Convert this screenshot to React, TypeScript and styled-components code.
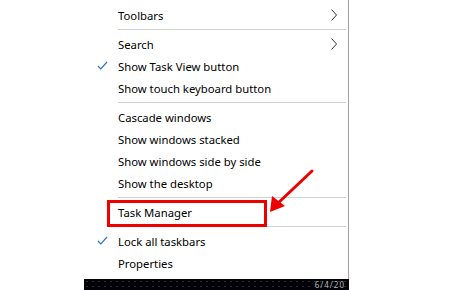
import React from "react";
import styled, { createGlobalStyle } from "styled-components";

const Global = createGlobalStyle`
  html, body { margin: 0; padding: 0; background: #fff; }
  body { width: 450px; height: 290px; overflow: hidden; font-family: "Segoe UI", "Noto Sans", "Open Sans", sans-serif; }
`;

const Page = styled.div`
  position: relative;
  width: 450px;
  height: 290px;
  display: flex;
  flex-direction: column;
`;

const Menu = styled.div`
  margin-left: 84px;
  width: 265px;
  height: 279px;
  box-sizing: border-box;
  border-right: 1px solid #a0a0a0;
  background: #fff;
  padding-top: 4px;
  display: flex;
  flex-direction: column;
`;

const Item = styled.div<{ $boxed?: boolean }>`
  position: relative;
  height: 22px;
  display: flex;
  align-items: center;
  padding-left: 34px;
  padding-right: 10px;
  font-size: 11.3px;
  color: #000;
  white-space: nowrap;
  &::after {
    content: "";
    display: ${(p) => (p.$boxed ? "block" : "none")};
    position: absolute;
    left: 23px;
    top: -1px;
    width: 160px;
    height: 27px;
    border: 3px solid #ee0000;
    box-sizing: border-box;
  }
`;

const Label = styled.span`
  flex: 1;
`;

const Check = styled.svg`
  position: absolute;
  left: 13px;
  top: 6px;
`;

const Chevron = styled.svg`
  margin-right: 1px;
`;

const Separator = styled.div`
  height: 1px;
  margin: 3px 2px 3px 34px;
  background: #cfd4cf;
`;

const Taskbar = styled.div`
  margin-left: 84px;
  width: 265px;
  height: 11px;
  background: #020208;
  overflow: hidden;
  display: flex;
  align-items: center;
  justify-content: flex-end;
  background-image: radial-gradient(circle, #2a2a3a 0.6px, transparent 0.8px);
  background-size: 6px 5px;
`;

const Clock = styled.span`
  font-size: 8px;
  line-height: 10px;
  color: #b8b8b8;
  margin-right: 4px;
  letter-spacing: 1px;
`;

const Arrow = styled.svg`
  position: absolute;
  left: 262px;
  top: 165px;
`;

const CheckIcon = () => (
  <Check width="11" height="9" viewBox="0 0 11 9">
    <path d="M1 5 L3.8 7.8 L10 1" fill="none" stroke="#2f73c9" strokeWidth="1.2" />
  </Check>
);

const ChevronIcon = () => (
  <Chevron width="6" height="12" viewBox="0 0 6 12">
    <path d="M0.5 0.5 L5.5 6 L0.5 11.5" fill="none" stroke="#333" strokeWidth="1" />
  </Chevron>
);

type Entry = { label: string; checked?: boolean; sub?: boolean; boxed?: boolean } | "sep";

const entries: Entry[] = [
  { label: "Toolbars", sub: true },
  "sep",
  { label: "Search", sub: true },
  { label: "Show Task View button", checked: true },
  { label: "Show touch keyboard button" },
  "sep",
  { label: "Cascade windows" },
  { label: "Show windows stacked" },
  { label: "Show windows side by side" },
  { label: "Show the desktop" },
  "sep",
  { label: "Task Manager", boxed: true },
  "sep",
  { label: "Lock all taskbars", checked: true },
  { label: "Properties" },
];

export default function App() {
  return (
    <Page>
      <Global />
      <Menu>
        {entries.map((e, i) =>
          e === "sep" ? (
            <Separator key={i} />
          ) : (
            <Item key={i} $boxed={e.boxed}>
              {e.checked && <CheckIcon />}
              <Label>{e.label}</Label>
              {e.sub && <ChevronIcon />}
            </Item>
          )
        )}
      </Menu>
      <Taskbar>
        <Clock>6/4/20</Clock>
      </Taskbar>
      <Arrow width="60" height="52" viewBox="0 0 60 52">
        <line x1="50" y1="6" x2="14" y2="40" stroke="#ee0000" strokeWidth="3" strokeLinecap="round" />
        <polygon points="8,47 10,31 23,41" fill="#ee0000" />
      </Arrow>
    </Page>
  );
}
